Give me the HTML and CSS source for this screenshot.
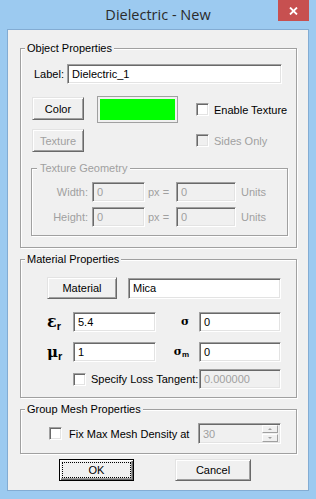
FILE: index.html
```html
<!DOCTYPE html>
<html>
<head>
<meta charset="utf-8">
<link rel="stylesheet" href="styles.css">
</head>
<body>
<div class="window">
  <div class="titlebar">
    <div class="title">Dielectric - New</div>
    <div class="close"><svg width="9" height="8" viewBox="0 0 9 8"><path d="M1 0.5 L8 7.5 M8 0.5 L1 7.5" stroke="#fff" stroke-width="1.8" fill="none"/></svg></div>
  </div>
  <div class="client">
    <div class="group g-object">
      <div class="legend">Object Properties</div>
      <div class="label-row">
        <span class="lbl">Label:</span>
        <div class="edit w-label">Dielectric_1</div>
      </div>
      <div class="color-grid">
        <div class="btn b-color">Color</div>
        <div class="swatch"><div class="swatch-fill"></div></div>
        <div class="check"><span class="box"></span><span>Enable Texture</span></div>
        <div class="btn b-texture disabled">Texture</div>
        <div></div>
        <div class="check disabled"><span class="box"></span><span>Sides Only</span></div>
      </div>
      <div class="group g-texgeo disabled">
        <div class="legend">Texture Geometry</div>
        <div class="geo-grid">
          <span class="geo-lbl">Width:</span>
          <div class="edit dis">0</div>
          <span class="geo-px">px =</span>
          <div class="edit dis">0</div>
          <span class="geo-units">Units</span>
          <span class="geo-lbl">Height:</span>
          <div class="edit dis">0</div>
          <span class="geo-px">px =</span>
          <div class="edit dis">0</div>
          <span class="geo-units">Units</span>
        </div>
      </div>
    </div>

    <div class="group g-material">
      <div class="legend">Material Properties</div>
      <div class="mat-row">
        <div class="btn b-material">Material</div>
        <div class="edit w-mica">Mica</div>
      </div>
      <div class="param-row pr-1">
        <span class="sym"><span class="gk eps">ε</span><span class="sub">r</span></span>
        <div class="edit w-val">5.4</div>
        <span class="sym2"><span class="gk sig">σ</span></span>
        <div class="edit w-val2">0</div>
      </div>
      <div class="param-row pr-2">
        <span class="sym"><span class="gk mu">μ</span><span class="sub">r</span></span>
        <div class="edit w-val">1</div>
        <span class="sym2"><span class="gk sig">σ</span><span class="sub subm">m</span></span>
        <div class="edit w-val2">0</div>
      </div>
      <div class="param-row pr-3">
        <span class="sym"></span>
        <div class="check loss"><span class="box"></span><span>Specify Loss Tangent:</span></div>
        <div class="edit w-val2 dis">0.000000</div>
      </div>
    </div>

    <div class="group g-mesh">
      <div class="legend">Group Mesh Properties</div>
      <div class="mesh-row">
        <div class="check mesh-check"><span class="box"></span><span>Fix Max Mesh Density at</span></div>
        <div class="edit dis spin">
          <span class="spin-text">30</span>
          <span class="spin-btns">
            <span class="spin-b"><span class="arr up"></span></span>
            <span class="spin-b"><span class="arr down"></span></span>
          </span>
        </div>
      </div>
    </div>

    <div class="btn-row">
      <div class="btn b-ok">OK</div>
      <div class="btn b-cancel">Cancel</div>
    </div>
  </div>
</div>
</body>
</html>
```

FILE: styles.css
```css
* { box-sizing: border-box; }
body {
  margin: 0;
  font-family: "Liberation Sans", Arial, sans-serif;
  font-size: 11px;
  color: #000;
}
.window {
  width: 316px;
  height: 499px;
  background: #9ccaf0;
  padding: 0 7px 8px;
  display: flex;
  flex-direction: column;
}
.titlebar {
  height: 29px;
  flex: none;
  display: grid;
  grid-template-columns: 1fr auto 1fr;
  align-items: start;
}
.title {
  grid-column: 2;
  font-family: "Open Sans", "Noto Sans", sans-serif;
  font-size: 14.5px;
  line-height: 29px;
  color: #2b2b2b;
}
.close {
  grid-column: 3;
  justify-self: end;
  width: 31px;
  height: 21px;
  background: #c75050;
  display: flex;
  align-items: center;
  justify-content: center;
}
.close svg { display: block; }
.client {
  flex: 1;
  background: #f0f0f0;
  border: 1px solid #83acd3;
  padding: 18px 11px 0 12px;
  display: flex;
  flex-direction: column;
}
.group {
  border: 1px solid #a0a0a0;
  box-shadow: 1px 1px 0 #fff, inset 1px 1px 0 #fff;
}
.legend {
  width: fit-content;
  margin: -7px 0 0 4px;
  padding: 0 2px;
  background: #f0f0f0;
  line-height: 13px;
  white-space: nowrap;
}
.disabled, .disabled .legend { color: #a0a0a0; }

.g-object { padding-bottom: 11px; }
.label-row {
  display: flex;
  align-items: center;
  margin-top: 9px;
  padding-left: 13px;
  height: 20px;
}
.lbl { width: 33px; }
.edit {
  height: 20px;
  border: 1px solid;
  border-color: #a0a0a0 #fff #fff #a0a0a0;
  box-shadow: inset 1px 1px 0 #696969, inset -1px -1px 0 #e3e3e3;
  background: #fff;
  padding: 0 0 0 4px;
  line-height: 18px;
  white-space: nowrap;
}
.edit.dis { background: #f0f0f0; color: #a0a0a0; }
.w-label { width: 215px; }

.color-grid {
  display: grid;
  grid-template-columns: 52px 81px 1fr;
  grid-template-rows: 27px 23px;
  column-gap: 13px;
  row-gap: 6px;
  align-items: center;
  margin-top: 12px;
  padding-left: 11px;
}
.btn {
  height: 23px;
  display: flex;
  align-items: center;
  justify-content: center;
  background: #f0f0f0;
  border: 1px solid;
  border-color: #e3e3e3 #696969 #696969 #e3e3e3;
  box-shadow: inset 1px 1px 0 #fff, inset -1px -1px 0 #a0a0a0;
  white-space: nowrap;
}
.b-color { align-self: start; margin-top: 1px; }
.swatch {
  width: 81px;
  height: 27px;
  border: 1px solid #a0a0a0;
  padding: 2px;
}
.swatch-fill { width: 100%; height: 100%; background: #00ff00; }
.check {
  display: flex;
  align-items: center;
  gap: 5px;
  margin-left: 5px;
  white-space: nowrap;
}
.box {
  flex: none;
  width: 13px;
  height: 13px;
  background: #fff;
  border: 1px solid;
  border-color: #a0a0a0 #fff #fff #a0a0a0;
  box-shadow: inset 1px 1px 0 #696969, inset -1px -1px 0 #e3e3e3;
}
.check.disabled .box { background: #f0f0f0; }

.g-texgeo {
  margin: 16px 8px 0 10px;
  padding-bottom: 8px;
}
.g-texgeo .legend { margin-left: 5px; padding: 0 3px; }
.geo-grid {
  display: grid;
  grid-template-columns: 60px 53px 31px 60px 1fr;
  grid-template-rows: 20px 20px;
  row-gap: 5px;
  align-items: center;
  margin-top: 7px;
}
.geo-lbl { text-align: right; padding-right: 4px; }
.geo-px { padding-left: 3px; }
.geo-units { padding-left: 5px; }

.g-material { margin-top: 11px; padding-bottom: 8px; }
.mat-row {
  display: flex;
  align-items: flex-start;
  margin-top: 11px;
  padding-left: 26px;
}
.b-material { width: 70px; height: 22px; }
.w-mica { width: 153px; height: 21px; margin: 1px 0 0 11px; line-height: 19px; }
.param-row {
  display: flex;
  align-items: center;
  height: 20px;
  padding-left: 26px;
}
.pr-1 { margin-top: 13px; }
.pr-2 { margin-top: 10px; }
.pr-3 { margin-top: 7px; }
.sym {
  width: 26px;
  flex: none;
  display: flex;
  align-items: baseline;
  font-weight: bold;
}
.sym2 {
  width: 43px;
  flex: none;
  display: flex;
  align-items: baseline;
  justify-content: flex-end;
  padding-right: 10px;
  font-weight: bold;
}
.gk { font-family: "DejaVu Serif", serif; font-weight: bold; line-height: 20px; }
.eps { font-size: 16px; }
.mu { font-size: 15px; }
.sig { font-size: 11px; }
.sub {
  font-family: "Liberation Sans", Arial, sans-serif;
  font-size: 11px;
  font-weight: bold;
  position: relative;
  top: 3px;
}
.subm { font-size: 8px; top: 2px; }
.w-val { width: 83px; }
.w-val2 { width: 82px; }
.loss { width: 126px; margin-left: 0; }

.g-mesh { margin-top: 11px; padding-bottom: 9px; }
.mesh-row {
  display: flex;
  align-items: center;
  margin-top: 7px;
  padding-left: 28px;
  height: 21px;
}
.mesh-check { width: 149px; margin-left: 0; gap: 7px; }
.spin {
  width: 83px;
  height: 21px;
  display: flex;
  padding: 1px 2px 1px 4px;
  line-height: 19px;
}
.spin-text { flex: 1; }
.spin-btns {
  width: 16px;
  display: flex;
  flex-direction: column;
  gap: 1px;
}
.spin-b {
  flex: 1;
  background: #f0f0f0;
  border: 1px solid;
  border-color: #fff #a0a0a0 #a0a0a0 #fff;
  display: flex;
  align-items: center;
  justify-content: center;
}
.arr { width: 0; height: 0; border-left: 2px solid transparent; border-right: 2px solid transparent; }
.arr.up { border-bottom: 2px solid #a0a0a0; }
.arr.down { border-top: 2px solid #a0a0a0; }

.btn-row {
  display: flex;
  margin-top: 5px;
  padding-left: 39px;
  gap: 41px;
}
.b-ok {
  width: 75px;
  height: 22px;
  border: 1px solid #000;
  box-shadow: inset 1px 1px 0 #fff, inset -1px -1px 0 #696969, inset -2px -2px 0 #a0a0a0;
  outline: 1px dotted #000;
  outline-offset: -4px;
}
.b-cancel { width: 76px; height: 22px; }
```
